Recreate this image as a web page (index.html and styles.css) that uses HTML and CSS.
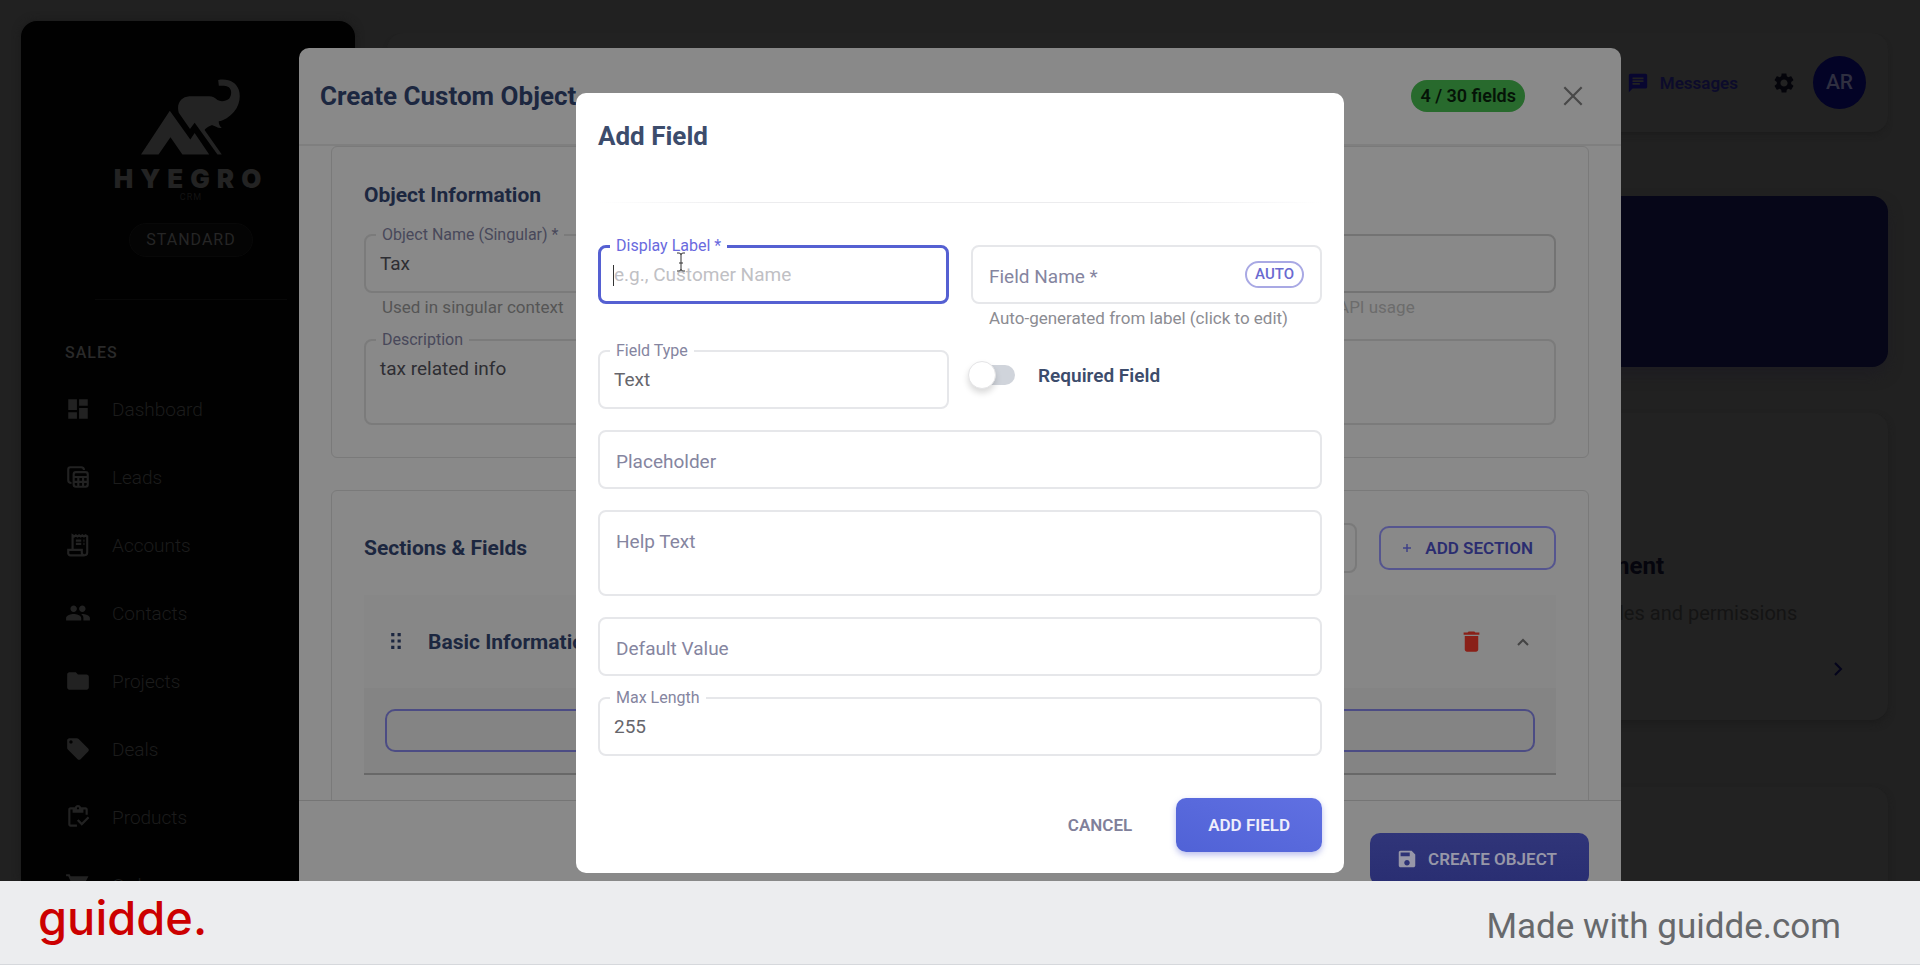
FILE: index.html
```html
<!DOCTYPE html>
<html lang="en">
	<head>
		<meta charset="UTF-8" />
		<meta name="viewport" content="width=device-width, initial-scale=1" />
		<title>Hyegro CRM - Add Field</title>
		<link rel="stylesheet" href="styles.css">
	</head>
	<body>
		<div class="stage">
			<div class="app">
				<nav class="sidebar">
					<svg class="logo" viewBox="154 57 302 228" aria-hidden="true">
						<path d="M154 284 241 152 303 239 316 219 360 284H279L243 232 207 284Z" />
						<path d="M302 207 268 158C260 130 275 110 300 108H360C370 108 378 112 385 120C395 126 410 124 420 116C428 106 428 92 422 84C415 77 405 77 389 77L387 59C420 54 440 66 449 88C456 108 452 135 435 155C422 170 404 182 389 184C388 192 392 200 398 204C385 206 378 198 370 196C362 196 352 204 346 210L398 284H385L316 188Z" />
					</svg>
					<div class="wordmark">HYEGRO</div>
					<div class="wordmark-sub">CRM</div>
					<div class="plan">STANDARD</div>
					<div class="side-divider"></div>
					<div class="side-title">SALES</div>
					<a class="side-link" href="#">
						<svg class="icon" viewBox="0 0 24 24"><path d="M3 13h8V3H3v10zm0 8h8v-6H3v6zm10 0h8V11h-8v10zm0-18v6h8V3h-8z" /></svg>
						Dashboard
					</a>
					<a class="side-link" href="#">
						<svg class="icon line" viewBox="0 0 24 24"><path d="M6 17.500C4 17.500 3 16.500 3 15V5a2 2 0 0 1 2-2h10c1.500 0 2.500 1 2.500 2.500" /><rect x="8" y="7.500" width="13" height="13.500" rx="2" /><path d="M8 12h13M8 16.500h13M12.300 12v9M16.700 12v9" /></svg>
						Leads
					</a>
					<a class="side-link" href="#">
						<svg class="icon line" viewBox="0 0 24 24"><path d="M7 16V3l1.500 1L10 3l1.500 1L13 3l1.500 1L16 3l1.500 1L19 3l1.500 1v15a2.500 2.500 0 0 1-5 0v-2.500H3V19a2 2 0 0 0 2 2.500h13" /><path d="M10 8h5M10 11h5M17 8h1M17 11h1" /></svg>
						Accounts
					</a>
					<a class="side-link" href="#">
						<svg class="icon" viewBox="0 0 24 24"><path d="M16 11c1.660 0 2.990-1.340 2.990-3S17.660 5 16 5c-1.660 0-3 1.340-3 3s1.340 3 3 3zm-8 0c1.660 0 2.990-1.340 2.990-3S9.660 5 8 5C6.340 5 5 6.340 5 8s1.340 3 3 3zm0 2c-2.330 0-7 1.170-7 3.500V19h14v-2.500c0-2.330-4.670-3.500-7-3.500zm8 0c-.29 0-.62.02-.97.05 1.160.84 1.970 1.970 1.970 3.450V19h6v-2.500c0-2.330-4.670-3.500-7-3.500z" /></svg>
						Contacts
					</a>
					<a class="side-link" href="#">
						<svg class="icon" viewBox="0 0 24 24"><path d="M10 4H4c-1.100 0-1.990.9-1.990 2L2 18c0 1.100.9 2 2 2h16c1.100 0 2-.9 2-2V8c0-1.100-.9-2-2-2h-8l-2-2z" /></svg>
						Projects
					</a>
					<a class="side-link" href="#">
						<svg class="icon" viewBox="0 0 24 24"><path d="m21.410 11.580-9-9C12.050 2.220 11.550 2 11 2H4c-1.100 0-2 .9-2 2v7c0 .55.22 1.050.59 1.420l9 9c.36.36.86.58 1.410.58.55 0 1.050-.22 1.410-.59l7-7c.37-.36.59-.86.59-1.410 0-.55-.23-1.060-.59-1.420zM5.500 7C4.670 7 4 6.330 4 5.500S4.670 4 5.500 4 7 4.670 7 5.500 6.330 7 5.500 7z" /></svg>
						Deals
					</a>
					<a class="side-link" href="#">
						<svg class="icon" viewBox="0 0 24 24"><path d="M5 5h2v3h10V5h2v5h2V5c0-1.100-.9-2-2-2h-4.180C14.400 1.840 13.300 1 12 1s-2.400.84-2.820 2H5c-1.100 0-2 .9-2 2v14c0 1.100.9 2 2 2h6v-2H5V5zm7-2c.55 0 1 .45 1 1s-.45 1-1 1-1-.45-1-1 .45-1 1-1z" /><path d="M21 11.500 15.510 17l-3.010-3-1.500 1.500 4.510 4.500 6.990-7z" /></svg>
						Products
					</a>
					<a class="side-link" href="#">
						<svg class="icon" viewBox="0 0 24 24"><path d="M7 18c-1.100 0-2 .9-2 2s.9 2 2 2 2-.9 2-2-.9-2-2-2zM1 2v2h2l3.600 7.590-1.350 2.450C4.520 15.370 5.480 17 7 17h12v-2H7l1.100-2h7.450c.75 0 1.410-.41 1.750-1.030L21.700 4H5.210l-.94-2H1zm16 16c-1.100 0-2 .9-2 2s.9 2 2 2 2-.9 2-2-.9-2-2-2z" /></svg>
						Orders
					</a>
				</nav>

				<div class="content">
					<header class="topbar">
						<a class="messages" href="#">
							<svg viewBox="0 0 24 24"><path d="M20 2H4c-1.100 0-1.990.9-1.990 2L2 22l4-4h14c1.100 0 2-.9 2-2V4c0-1.100-.9-2-2-2zM6 9h12v2H6V9zm8 5H6v-2h8v2zm4-6H6V6h12v2z" /></svg>
							Messages
						</a>
						<svg class="gear" viewBox="0 0 24 24"><path d="M19.140 12.940c.04-.3.06-.61.06-.94 0-.32-.02-.64-.07-.94l2.030-1.580c.18-.14.23-.41.12-.61l-1.920-3.320c-.12-.22-.37-.29-.59-.22l-2.390.96c-.5-.38-1.030-.7-1.620-.94l-.36-2.540c-.04-.24-.24-.41-.48-.41h-3.840c-.24 0-.43.17-.47.41l-.36 2.540c-.59.24-1.130.57-1.620.94l-2.390-.96c-.22-.08-.47 0-.59.22L2.740 8.870c-.12.21-.08.47.12.61l2.030 1.580c-.05.3-.09.63-.09.94s.02.64.07.94l-2.030 1.580c-.18.14-.23.41-.12.61l1.920 3.320c.12.22.37.29.59.22l2.390-.96c.5.38 1.030.7 1.620.94l.36 2.540c.05.24.24.41.48.41h3.840c.24 0 .44-.17.47-.41l.36-2.540c.59-.24 1.130-.56 1.620-.94l2.390.96c.22.08.47 0 .59-.22l1.920-3.320c.12-.22.07-.47-.12-.61l-2.010-1.580zM12 15.600c-1.980 0-3.600-1.620-3.600-3.600s1.620-3.600 3.600-3.600 3.600 1.620 3.600 3.600-1.620 3.600-3.600 3.600z" /></svg>
						<div class="avatar">AR</div>
					</header>
					<div class="hero"></div>
					<div class="card">
						<h2>User Management</h2>
						<p>Manage users, roles and permissions</p>
						<svg class="go" viewBox="0 0 24 24"><path d="m9 6 6 6-6 6" /></svg>
					</div>
					<div class="card"></div>
				</div>
			</div>

			<!-- Create Custom Object -->
			<div class="overlay object-overlay">
				<section class="object-dialog">
					<header class="object-head">
						<h1>Create Custom Object</h1>
						<span class="count">4 / 30 fields</span>
						<button class="close" type="button" aria-label="Close">
							<svg viewBox="0 0 24 24"><path d="M4 4 20 20M20 4 4 20" /></svg>
						</button>
					</header>
					<div class="object-body">
						<div class="panel">
							<h2>Object Information</h2>
							<div class="object-form">
								<div class="object-row">
									<div class="field dim">
										<label for="singular">Object Name (Singular) *</label>
										<input id="singular" type="text" value="Tax">
										<p class="helper">Used in singular context</p>
									</div>
									<div class="field dim faint last">
										<input type="text" aria-label="API name">
										<p class="helper">Used for plural and API usage</p>
									</div>
								</div>
								<div class="field dim">
									<label for="description">Description</label>
									<textarea id="description">tax related info</textarea>
								</div>
							</div>
						</div>
						<div class="panel">
							<div class="panel-head">
								<h2>Sections &amp; Fields</h2>
								<input class="template" type="text" aria-label="Template">
								<button class="add-section" type="button">
									<svg viewBox="0 0 24 24"><path d="M12 4v16M4 12h16" /></svg>
									ADD SECTION
								</button>
							</div>
							<div class="accordion">
								<div class="accordion-head">
									<svg class="drag" viewBox="0 0 10 16"><path d="M0 0h3v3H0zM6 0h3v3H6zM0 6h3v3H0zM6 6h3v3H6zM0 12h3v3H0zM6 12h3v3H6z" /></svg>
									<h2>Basic Information</h2>
									<svg class="trash" viewBox="0 0 24 24"><path d="M6 19c0 1.100.9 2 2 2h8c1.100 0 2-.9 2-2V7H6v12zM19 4h-3.500l-1-1h-5l-1 1H5v2h14V4z" /></svg>
									<svg class="caret-up" viewBox="0 0 12 8"><path d="m1 7 5-5 5 5" /></svg>
								</div>
								<div class="accordion-body">
									<button class="add-row" type="button" aria-label="Add field to section"></button>
								</div>
							</div>
						</div>
					</div>
					<footer class="object-foot">
						<button class="create" type="button">
							<svg viewBox="0 0 24 24"><path d="M17 3H5c-1.110 0-2 .9-2 2v14c0 1.100.89 2 2 2h14c1.100 0 2-.9 2-2V7l-4-4zm-5 16c-1.660 0-3-1.340-3-3s1.340-3 3-3 3 1.340 3 3-1.340 3-3 3zm3-10H5V5h10v4z" /></svg>
							CREATE OBJECT
						</button>
					</footer>
				</section>
			</div>

			<!-- Add Field -->
			<div class="overlay field-overlay">
				<form class="field-dialog">
					<h1>Add Field</h1>
					<div class="fade-line"></div>
					<div class="fields">
						<div class="row">
							<div class="field active">
								<label for="display-label">Display Label *</label>
								<input id="display-label" type="text" placeholder="e.g., Customer Name">
								<span class="text-caret"></span>
								<svg class="pointer" viewBox="0 0 10 20"><path d="M1 1h2q2 0 2 2v14q0 2-2 2H1M9 1H7Q5 1 5 3M9 19H7q-2 0-2-2M3 11h4" /></svg>
							</div>
							<div class="field rest">
								<label for="field-name">Field Name *</label>
								<input id="field-name" type="text">
								<span class="auto">AUTO</span>
								<p class="helper">Auto-generated from label (click to edit)</p>
							</div>
						</div>
						<div class="row">
							<div class="field">
								<label for="field-type">Field Type</label>
								<select id="field-type">
									<option>Text</option>
								</select>
							</div>
							<div class="switch">
								<input id="required" type="checkbox">
								<label for="required">Required Field</label>
							</div>
						</div>
						<div class="field rest">
							<label for="placeholder">Placeholder</label>
							<input id="placeholder" type="text">
						</div>
						<div class="field rest">
							<label for="help-text">Help Text</label>
							<textarea id="help-text"></textarea>
						</div>
						<div class="field rest">
							<label for="default-value">Default Value</label>
							<input id="default-value" type="text">
						</div>
						<div class="field">
							<label for="max-length">Max Length</label>
							<input id="max-length" type="text" value="255">
						</div>
					</div>
					<div class="actions">
						<button class="cancel" type="button">CANCEL</button>
						<button class="submit" type="button">ADD FIELD</button>
					</div>
				</form>
			</div>
		</div>

		<footer class="brand-bar">
			<div class="brand">guidde.</div>
			<div class="made">Made with guidde.com</div>
		</footer>
	</body>
</html>
```
FILE: styles.css
```css
* {
	box-sizing: border-box;
}

body {
	margin: 0;
	height: 100vh;
	display: flex;
	flex-direction: column;
	overflow: hidden;
	background: #fff;
	font-family: Roboto, "Liberation Sans", sans-serif;
}

h1,
h2,
p {
	margin: 0;
}

a {
	text-decoration: none;
}

button,
input,
select,
textarea {
	font-family: inherit;
	margin: 0;
}

.stage {
	flex: 1;
	min-height: 0;
	position: relative;
	overflow: hidden;
	background: #212121;
}

.app {
	display: flex;
	height: 100%;
	padding-left: 21px;
}

/* Sidebar */
.sidebar {
	flex: 0 0 334px;
	margin-top: 21px;
	padding: 58px 38px 0 44px;
	display: flex;
	flex-direction: column;
	background: #010101;
	border-radius: 16px 16px 0 0;
	box-shadow: 0 0 8px #1a1a1a;
}

.logo {
	width: 100px;
	height: 76px;
	flex: none;
	align-self: center;
	fill: #232323;
}

.wordmark {
	margin-top: 11px;
	text-align: center;
	font: 900 26px/26px Inter, sans-serif;
	letter-spacing: 7px;
	color: #232323;
}

.wordmark-sub {
	text-align: center;
	font-size: 9px;
	line-height: 10px;
	letter-spacing: 1px;
	color: #131313;
}

.plan {
	align-self: center;
	margin-top: 21px;
	padding: 0 16px;
	border: 1px solid #080808;
	border-radius: 17px;
	background: #040404;
	font-size: 16px;
	line-height: 32px;
	letter-spacing: 1px;
	color: #262626;
}

.side-divider {
	flex: none;
	height: 1px;
	margin: 42px 30px 43px;
	background: #080808;
}

.side-title {
	margin-bottom: 12px;
	font-size: 16px;
	font-weight: 500;
	line-height: 20px;
	letter-spacing: 1px;
	color: #2a2a2a;
}

.side-link {
	flex: 0 0 68px;
	display: flex;
	align-items: center;
	gap: 21px;
	font-size: 19px;
	font-weight: 300;
	color: #1c1c1c;
}

.icon {
	width: 26px;
	height: 26px;
	fill: #222;
}

.icon.line {
	fill: none;
	stroke: #222;
	stroke-width: 2;
}

/* Page behind the dialogs */
.content {
	flex: 1;
	padding: 33px 32px 0;
	display: flex;
	flex-direction: column;
}

.topbar {
	flex: 0 0 99px;
	display: flex;
	align-items: center;
	justify-content: flex-end;
	padding-right: 22px;
	border-radius: 16px;
	background: #222;
	box-shadow: 0 5px 8px -5px #181818;
}

.messages {
	display: flex;
	align-items: center;
	gap: 11px;
	margin-right: 34px;
	font-size: 17px;
	font-weight: 600;
	color: #0c0b2b;
}

.messages svg {
	width: 22px;
	height: 22px;
	fill: #080630;
}

.gear {
	width: 24px;
	height: 24px;
	margin-right: 17px;
	fill: #04040a;
}

.avatar {
	width: 53px;
	height: 53px;
	border-radius: 50%;
	background: #030326;
	color: #2f2f40;
	font-size: 21px;
	font-weight: 500;
	line-height: 53px;
	text-align: center;
}

.hero {
	flex: 0 0 171px;
	margin: 64px 0 46px;
	border-radius: 16px;
	background: #060618;
	box-shadow: 0 8px 14px #1e1d22;
}

.card {
	flex: 0 0 307px;
	align-self: flex-end;
	width: 450px;
	margin-bottom: 67px;
	padding: 0 38px 39px 28px;
	display: flex;
	flex-direction: column;
	justify-content: flex-end;
	border-radius: 16px;
	background: #222;
	box-shadow: 0 4px 8px -2px #1a1a1a;
}

.card h2 {
	font-size: 24px;
	line-height: 32px;
	color: #05050d;
}

.card p {
	margin: 16px 0 29px;
	font-size: 20px;
	line-height: 30px;
	color: #141414;
}

.go {
	width: 24px;
	height: 24px;
	align-self: flex-end;
	fill: none;
	stroke: #04041c;
	stroke-width: 2;
}

/* Dialog layers */
.overlay {
	position: absolute;
	inset: 0;
	display: flex;
	justify-content: center;
	align-items: flex-start;
}

.object-overlay {
	padding-top: 48px;
}

.field-overlay {
	padding-top: 93px;
}

/* Outlined form field, label sits on the border */
.field {
	position: relative;
}

.field label {
	position: absolute;
	top: -9px;
	left: 12px;
	padding: 0 6px;
	background: #fff;
	font-size: 16px;
	line-height: 20px;
	color: #8585a0;
}

.field input,
.field select,
.field textarea {
	display: block;
	width: 100%;
	height: 59px;
	padding: 0 14px;
	border: 2px solid #e6e7ea;
	border-radius: 8px;
	background: none;
	outline: none;
	appearance: none;
	font-size: 19px;
	color: #66666c;
}

.field textarea {
	height: 86px;
	padding: 16px 14px;
	line-height: 24px;
	resize: none;
}

.field.rest label {
	top: 20px;
	font-size: 19px;
	line-height: 24px;
}

.field input::placeholder {
	color: #c0c0c4;
	opacity: 1;
}

.field.active input {
	border: 3px solid #5560d2;
	padding: 0 13px;
}

.field.active label {
	color: #6a6ade;
}

.helper {
	padding: 3px 0 0 18px;
	font-size: 17px;
	line-height: 22px;
	color: #8c8c92;
}

.text-caret {
	position: absolute;
	left: 15px;
	top: 20px;
	width: 1px;
	height: 21px;
	background: #333;
}

.pointer {
	position: absolute;
	left: 78px;
	top: 7px;
	width: 10px;
	height: 20px;
	fill: none;
	stroke: #333;
}

/* Create Custom Object */
.object-dialog {
	width: 92%;
	max-width: 1322px;
	border-radius: 10px 10px 0 0;
	background: #898989;
}

.object-head {
	height: 98px;
	padding: 0 35px 0 21px;
	display: flex;
	align-items: center;
	border-bottom: 2px solid #7f7f7f;
}

.object-head h1 {
	margin-right: auto;
	font-size: 26px;
	font-weight: 700;
	color: #1c2740;
}

.count {
	padding: 0 9px;
	border-radius: 16px;
	background: #286a2d;
	font-size: 18px;
	font-weight: 600;
	line-height: 32px;
	color: #051407;
}

.close {
	margin-left: 35px;
	padding: 0;
	border: 0;
	background: none;
}

.close svg {
	display: block;
	width: 26px;
	height: 26px;
	fill: none;
	stroke: #484848;
	stroke-width: 2;
}

.object-body {
	height: calc(100vh - 312px);
	padding: 0 32px;
	overflow: hidden;
}

.panel {
	margin-bottom: 32px;
	padding: 32px;
	border: 1px solid #7a7a7a;
	border-radius: 6px;
}

.panel h2 {
	font-size: 21px;
	font-weight: 700;
	line-height: 32px;
	color: #1c2740;
}

.object-form {
	display: flex;
	flex-direction: column;
	gap: 21px;
	margin-top: 23px;
}

.object-row {
	display: grid;
	grid-template-columns: repeat(3, 1fr);
	gap: 22px;
}

.last {
	grid-column: 3;
}

.dim label {
	background: #898989;
	color: #48485a;
}

.dim input,
.dim textarea {
	border-color: #7b7b7b;
	color: #2e2e33;
}

.dim .helper {
	color: #555;
}

.faint .helper {
	color: #6c6c6c;
}

.faint input {
	border-color: #737373;
}

.panel-head {
	display: flex;
	align-items: center;
	gap: 22px;
	margin-bottom: 22px;
}

.template {
	width: 240px;
	height: 50px;
	margin-left: auto;
	border: 2px solid #7a7a7a;
	border-radius: 8px;
	background: none;
}

.add-section {
	height: 44px;
	padding: 0 21px 0 20px;
	display: flex;
	align-items: center;
	gap: 12px;
	border: 2px solid #55558f;
	border-radius: 10px;
	background: none;
	font-size: 17px;
	font-weight: 600;
	color: #2b2d70;
}

.add-section svg {
	width: 12px;
	height: 12px;
	fill: none;
	stroke: #3f4188;
	stroke-width: 3;
}

.accordion {
	background: #848484;
	border-bottom: 2px solid #686868;
}

.accordion-head {
	height: 93px;
	padding: 0 27px;
	display: flex;
	align-items: center;
	background: #878787;
}

.drag {
	width: 11px;
	height: 17px;
	margin-right: 26px;
	fill: #1c2740;
}

.trash {
	width: 27px;
	height: 27px;
	margin: 0 32px 0 auto;
	fill: #8a2018;
}

.caret-up {
	width: 12px;
	height: 8px;
	fill: none;
	stroke: #444;
	stroke-width: 2;
}

.accordion-body {
	padding: 21px;
}

.add-row {
	display: block;
	width: 100%;
	height: 43px;
	border: 2px solid #4c4c84;
	border-radius: 10px;
	background: none;
}

.object-foot {
	display: flex;
	justify-content: flex-end;
	padding: 32px;
	border-top: 1px solid #757575;
}

.create {
	height: 52px;
	padding: 0 32px 0 26px;
	display: flex;
	align-items: center;
	gap: 10px;
	border: 0;
	border-radius: 10px;
	background: linear-gradient(#303579, #292e72);
	font-size: 17px;
	font-weight: 600;
	color: #9797a8;
}

.create svg {
	width: 22px;
	height: 22px;
	fill: #9797a8;
}

/* Add Field */
.field-dialog {
	width: 92%;
	max-width: 768px;
	padding: 24px 22px 21px;
	border-radius: 10px;
	background: #fff;
}

.field-dialog h1 {
	font-size: 26px;
	font-weight: 700;
	line-height: 38px;
	color: #3c4c6c;
}

.fade-line {
	height: 1px;
	margin: 47px 0 42px;
	background: linear-gradient(90deg, transparent, #ececee 20%, #ececee 80%, transparent);
}

.fields {
	display: flex;
	flex-direction: column;
	gap: 21px;
}

.row {
	display: grid;
	grid-template-columns: 1fr 1fr;
	gap: 22px;
}

.auto {
	position: absolute;
	top: 16px;
	right: 18px;
	padding: 0 8px;
	border: 2px solid #a9a9e4;
	border-radius: 14px;
	font-size: 15px;
	font-weight: 500;
	line-height: 23px;
	color: #6a6ad0;
}

.switch {
	display: flex;
	align-items: center;
	gap: 23px;
	padding-bottom: 9px;
}

.switch input {
	appearance: none;
	display: flex;
	align-items: center;
	width: 44px;
	height: 20px;
	border-radius: 10px;
	background: #d0d4db;
}

.switch input::before {
	content: "";
	width: 26px;
	height: 26px;
	margin-left: -3px;
	border: 1px solid #e4e4e6;
	border-radius: 50%;
	background: #fff;
	box-shadow: 0 4px 6px rgba(0, 0, 0, 0.15);
}

.switch label {
	font-size: 19px;
	font-weight: 600;
	color: #3c4c6c;
}

.actions {
	display: flex;
	justify-content: flex-end;
	gap: 12px;
	margin-top: 42px;
}

.actions button {
	height: 54px;
	padding: 0 32px;
	border: 0;
	border-radius: 10px;
	font-size: 17px;
	font-weight: 600;
}

.actions .cancel {
	background: none;
	color: #80809a;
}

.actions .submit {
	background: linear-gradient(to top right, #5062d6, #6070e2);
	box-shadow: 0 3px 6px rgba(85, 96, 210, 0.4);
	color: #eeeefb;
}

/* Brand bar */
.brand-bar {
	flex: 0 0 84px;
	display: flex;
	align-items: center;
	justify-content: space-between;
	margin-bottom: 1px;
	padding: 0 79px 0 38px;
	border-bottom: 1px solid #d6d8dc;
	background: #ecedef;
}

.brand {
	padding-bottom: 10px;
	font: 500 47px/56px Inter, sans-serif;
	color: #c00;
}

.made {
	padding-top: 8px;
	font-size: 35px;
	line-height: 42px;
	color: #67696c;
}
```
